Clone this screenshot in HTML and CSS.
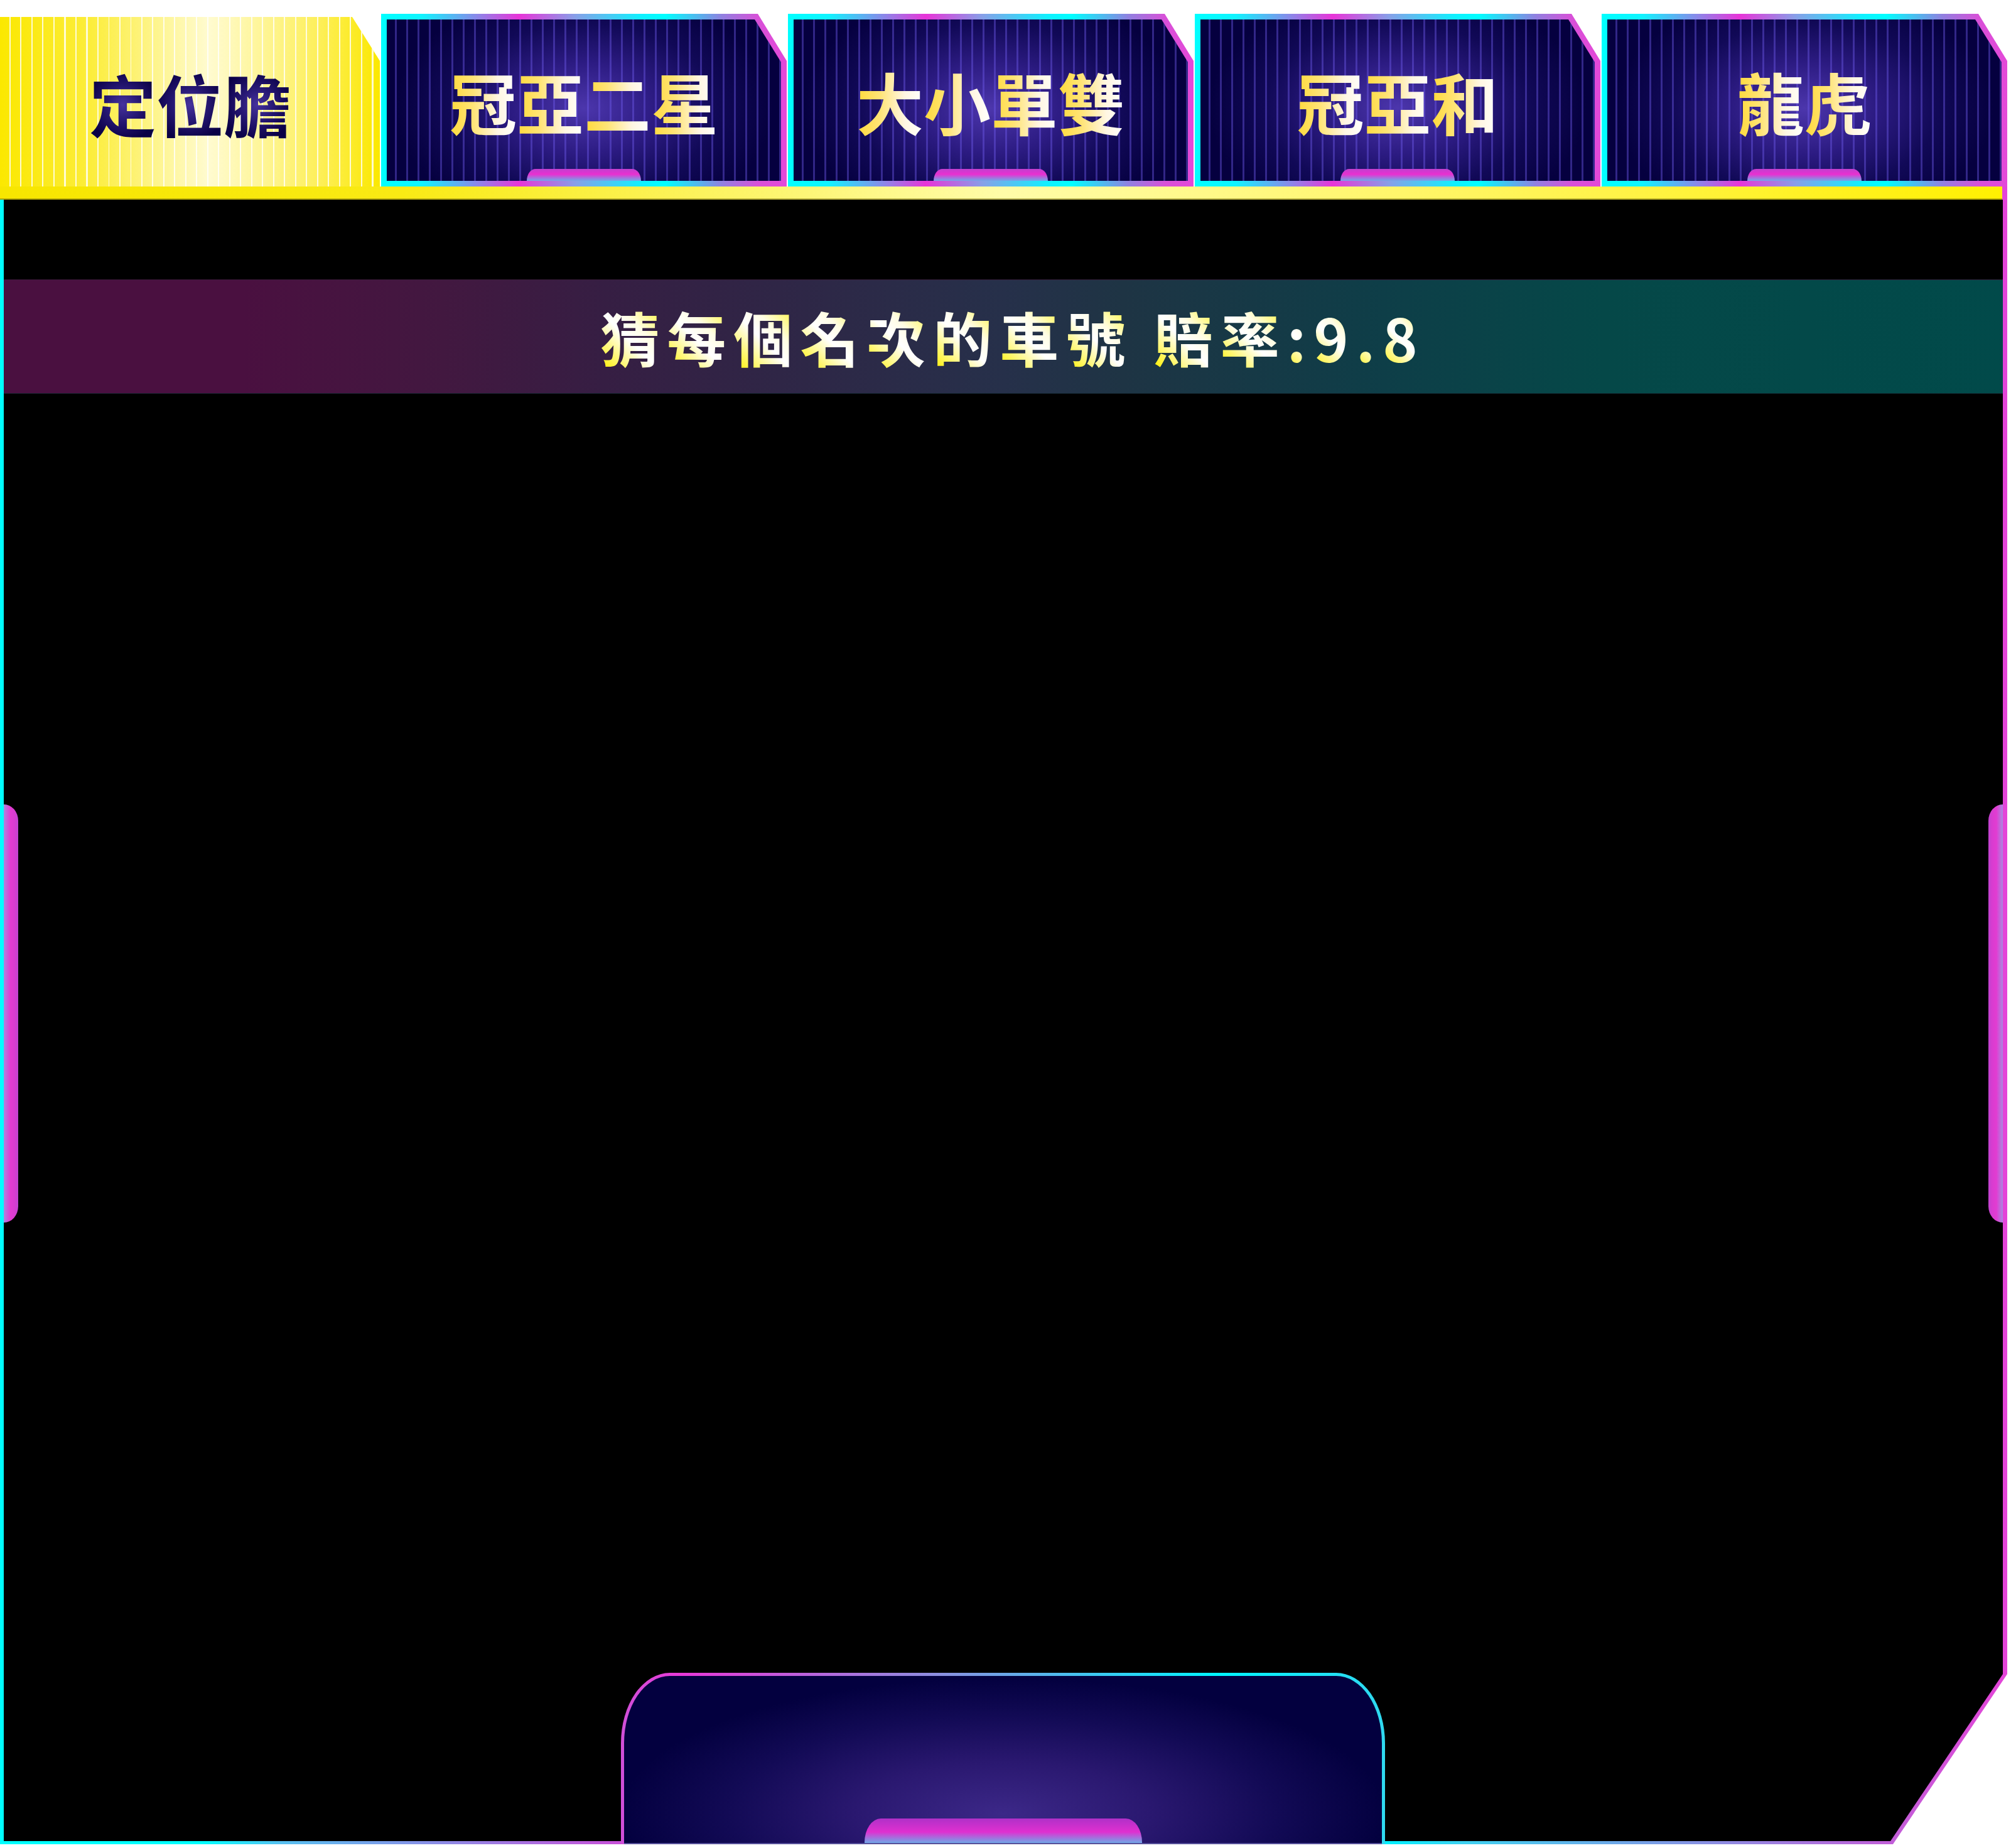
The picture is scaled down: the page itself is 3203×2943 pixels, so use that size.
FILE: index.html
```html
<!DOCTYPE html>
<html lang="zh-Hant">
<head>
<meta charset="utf-8">
<title>定位膽</title>
<link rel="stylesheet" href="styles.css">
</head>
<body>
<div class="page">
  <div class="tabs">
    <div class="tab-active">
      <span class="label label-dark"><span>定</span><span>位</span><span>膽</span></span>
    </div>
    <div class="tab">
      <div class="tab-inner">
        <span class="label label-gold"><span>冠</span><span>亞</span><span>二</span><span>星</span></span>
        <span class="pill"></span>
      </div>
    </div>
    <div class="tab">
      <div class="tab-inner">
        <span class="label label-gold"><span>大</span><span>小</span><span>單</span><span>雙</span></span>
        <span class="pill"></span>
      </div>
    </div>
    <div class="tab">
      <div class="tab-inner">
        <span class="label label-gold"><span>冠</span><span>亞</span><span>和</span></span>
        <span class="pill"></span>
      </div>
    </div>
    <div class="tab">
      <div class="tab-inner">
        <span class="label label-gold"><span>龍</span><span>虎</span></span>
        <span class="pill"></span>
      </div>
    </div>
  </div>
  <div class="bar"></div>
  <div class="frame">
    <div class="frame-inner">
      <div class="banner">
        <p class="banner-text"><span>猜</span><span>每</span><span>個</span><span>名</span><span>次</span><span>的</span><span>車</span><span>號</span> <span>賠</span><span>率</span><span>:</span><span>9</span><span>.</span><span>8</span></p>
      </div>
    </div>
    <span class="handle handle-left"></span>
    <span class="handle handle-right"></span>
    <div class="base">
      <div class="base-inner">
        <span class="base-pill"></span>
      </div>
    </div>
  </div>
</div>
</body>
</html>
```
FILE: styles.css
```css
html, body {
  margin: 0;
  padding: 0;
  background: #ffffff;
}

.page {
  width: 3197px;
  padding-top: 22px;
  font-family: "Noto Sans CJK TC", "Noto Sans CJK SC", sans-serif;
}

/* ---------- tabs ---------- */
.tabs {
  display: flex;
  align-items: flex-end;
  gap: 2px;
  height: 275px;
}

.tab-active {
  flex: none;
  width: 605px;
  height: 270px;
  box-sizing: border-box;
  padding-top: 2px;
  display: flex;
  align-items: center;
  justify-content: center;
  clip-path: polygon(0 0, calc(100% - 44px) 0, 100% 70px, 100% 100%, 0 100%);
  background:
    repeating-linear-gradient(90deg, rgba(255,255,255,0) 0 15px, rgba(255,255,255,0.8) 15px 17px, rgba(255,255,255,0) 17px 17.5px),
    linear-gradient(90deg, #fbe800 0%, #fced3c 24%, #fffbd0 55%, #fdef5a 84%, #fbe800 100%);
}

.tab {
  flex: none;
  width: 646px;
  height: 275px;
  box-sizing: border-box;
  padding: 9px;
  clip-path: polygon(0 0, calc(100% - 46px) 0, 100% 75px, 100% 100%, 0 100%);
  background: linear-gradient(90deg, #00ffff 0%, #10f4ff 10%, #e834d8 34%, #86a0e8 48%, #10f0ff 64%, #00ffff 70%, #9080e0 84%, #d850d8 93%, #e448d8 100%);
}

.tab-inner {
  height: 100%;
  display: flex;
  flex-direction: column;
  align-items: center;
  justify-content: flex-end;
  clip-path: polygon(0 0, calc(100% - 42px) 0, 100% 68px, 100% 100%, 0 100%);
  background:
    repeating-linear-gradient(90deg, rgba(110,90,235,0) 0 13px, rgba(110,90,235,0.42) 13px 16px, rgba(110,90,235,0) 16px 18px),
    radial-gradient(ellipse 48% 75% at 50% 55%, #4c36ac 0%, #2c1b82 38%, #110957 70%, #05003f 100%);
}

.label {
  font-size: 107px;
  line-height: 1;
  font-weight: 700;
  white-space: nowrap;
}

.label span {
  -webkit-background-clip: text;
  background-clip: text;
  color: transparent;
}

.label-gold {
  margin-bottom: 55px;
}

.label-gold span {
  background-image: linear-gradient(90deg, #ffd93a 0%, #ffe476 35%, #fff6e2 72%, #ffffff 100%);
}

.label-dark span {
  background-image: radial-gradient(circle at 50% 52%, #46329e 0%, #241670 30%, #0a0046 60%);
}

.pill {
  width: 182px;
  height: 19px;
  border-radius: 14px 14px 0 0 / 19px 19px 0 0;
  background: linear-gradient(180deg, #c040d0 0%, #e830d0 45%, #70a8e8 100%);
}

/* ---------- yellow bar ---------- */
.bar {
  height: 21px;
  background:
    linear-gradient(#e444d8, #e444d8) right top / 8px 100% no-repeat,
    linear-gradient(180deg, rgba(0,0,0,0) 19px, rgba(120,110,10,0.55) 19px) left top / calc(100% - 8px) 100% no-repeat,
    linear-gradient(90deg, #f7e600 0%, #f9ea14 20%, #fffca8 50%, #fff34a 80%, #fff000 100%);
}

/* ---------- frame ---------- */
.frame {
  position: relative;
  height: 2619px;
  box-sizing: border-box;
  padding: 0 7px 5px 6px;
  clip-path: polygon(0 0, 100% 0, 100% calc(100% - 271px), calc(100% - 182px) 100%, 0 100%);
  background: linear-gradient(90deg, #00ffff 0%, #00ffff 10%, #58c0f0 14%, #c850d8 31%, #00f0ff 69%, #40d0f0 73%, #c060d8 94%, #e444d8 100%);
}

.frame-inner {
  height: 100%;
  background: #000000;
  clip-path: polygon(0 0, 100% 0, 100% calc(100% - 266px), calc(100% - 179px) 100%, 0 100%);
  display: flex;
  flex-direction: column;
}

.banner {
  margin-top: 127px;
  height: 182px;
  display: flex;
  align-items: center;
  justify-content: center;
  background: linear-gradient(90deg, #4a1040 0%, #4a1040 12%, #421840 22%, #361e43 30%, #26304a 50%, #1e3444 56%, #0e3e48 69%, #054848 80%, #014a4a 100%);
  box-shadow: inset 0 1px 0 rgba(60,30,60,0.8), inset 0 -1px 0 rgba(20,40,50,0.8);
}

.banner-text {
  margin: 0;
  padding-left: 30px;
  font-size: 94px;
  line-height: 1;
  font-weight: 700;
  letter-spacing: 12px;
  white-space: nowrap;
  color: #fff8a0;
}

.banner-text span {
  background-image: linear-gradient(45deg, #fff000 8%, #ffffff 45%, #fffde4 60%, #fff200 95%);
  -webkit-background-clip: text;
  background-clip: text;
  color: transparent;
}

/* ---------- side handles ---------- */
.handle {
  position: absolute;
  top: 963px;
  width: 23px;
  height: 666px;
}

.handle-left {
  left: 6px;
  border-radius: 0 23px 23px 0 / 0 26px 26px 0;
  background: linear-gradient(90deg, #a888e0 0%, #e23cd2 45%, #d83cd0 75%, #c044d0 100%);
}

.handle-right {
  right: 7px;
  border-radius: 23px 0 0 23px / 26px 0 0 26px;
  background: linear-gradient(270deg, #a888e0 0%, #e23cd2 45%, #d83cd0 75%, #c044d0 100%);
}

/* ---------- bottom base ---------- */
.base {
  position: absolute;
  left: 989px;
  bottom: 0;
  width: 1217px;
  height: 273px;
  box-sizing: border-box;
  padding: 5px 5px 0 5px;
  border-radius: 78px 78px 0 0 / 112px 112px 0 0;
  background: linear-gradient(90deg, #d050d8 0%, #e838d8 8%, #8a90e0 42%, #00f4ff 78%, #30d8f0 100%);
}

.base-inner {
  height: 100%;
  display: flex;
  align-items: flex-end;
  justify-content: center;
  border-radius: 73px 73px 0 0 / 107px 107px 0 0;
  background: radial-gradient(ellipse 55% 88% at 50% 82%, #3c2888 0%, #2a1870 35%, #120a55 66%, #03003f 92%);
  box-shadow: inset 0 -2px 0 #56509a;
}

.base-pill {
  width: 442px;
  height: 39px;
  margin-bottom: 2px;
  border-radius: 26px 26px 0 0 / 38px 38px 0 0;
  background: linear-gradient(180deg, #b030c8 0%, #e030d0 55%, #70a8e8 100%);
}
```
